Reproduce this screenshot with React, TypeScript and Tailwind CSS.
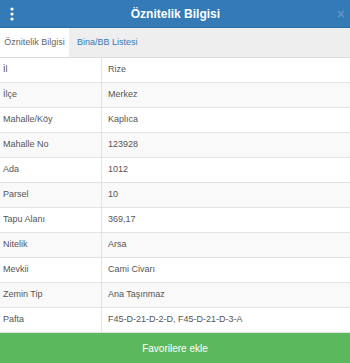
import React from 'react';

const rows: [string, string][] = [
  ['İl', 'Rize'],
  ['İlçe', 'Merkez'],
  ['Mahalle/Köy', 'Kaplıca'],
  ['Mahalle No', '123928'],
  ['Ada', '1012'],
  ['Parsel', '10'],
  ['Tapu Alanı', '369,17'],
  ['Nitelik', 'Arsa'],
  ['Mevkii', 'Cami Civarı'],
  ['Zemin Tip', 'Ana Taşınmaz'],
  ['Pafta', 'F45-D-21-D-2-D, F45-D-21-D-3-A'],
];

export default function App() {
  return (
    <div
      className="w-[350px] h-[363px] flex flex-col bg-white overflow-hidden"
      style={{ fontFamily: '"Liberation Sans", Arial, sans-serif' }}
    >
      {/* Header */}
      <div className="h-[28px] flex items-center bg-[#337ab7] border-b border-[#2e6da4] pl-[10px] pr-[5px]">
        <svg width="4" height="14" viewBox="0 0 4 14" className="text-white">
          <circle cx="2" cy="2" r="1.6" fill="currentColor" />
          <circle cx="2" cy="7" r="1.6" fill="currentColor" />
          <circle cx="2" cy="12" r="1.6" fill="currentColor" />
        </svg>
        <div className="flex-1 text-center text-white text-[12px] font-bold leading-none">Öznitelik Bilgisi</div>
        <span className="text-[#5f93c6] text-[14px] font-bold leading-none">×</span>
      </div>

      {/* Tabs */}
      <div className="h-[30px] flex bg-[#eeeeee] border-b border-[#dddddd]">
        <div className="w-[69px] bg-white flex items-center justify-center text-[9px] text-[#666]">
          Öznitelik Bilgisi
        </div>
        <div className="px-[8px] flex items-center text-[9px] text-[#337ab7]">Bina/BB Listesi</div>
      </div>

      {/* Table */}
      <div className="flex-1 flex flex-col">
        {rows.map(([k, v], i) => (
          <div
            key={k}
            className={`h-[25px] flex border-b border-[#e3e3e3] text-[9px] text-[#555] ${
              i % 2 === 1 ? 'bg-[#f9f9f9]' : 'bg-white'
            }`}
          >
            <div className="w-[102px] flex items-center pl-[3px] border-r border-[#e3e3e3]">{k}</div>
            <div className="flex-1 flex items-center pl-[6px]">{v}</div>
          </div>
        ))}
      </div>

      {/* Button */}
      <div className="h-[30px] flex items-center justify-center bg-[#5cb85c] text-white text-[10px]">
        Favorilere ekle
      </div>
    </div>
  );
}
